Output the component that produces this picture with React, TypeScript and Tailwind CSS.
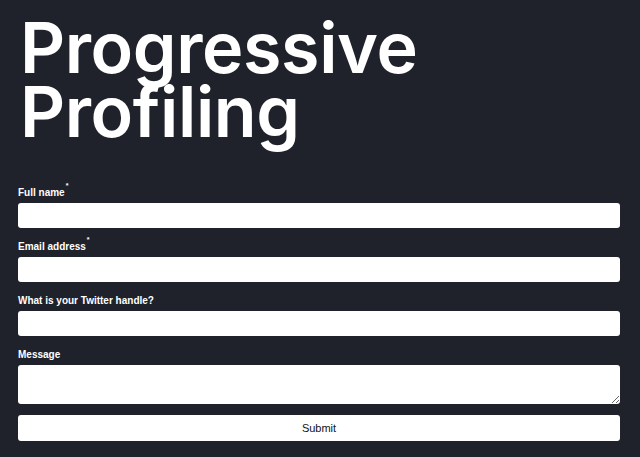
import { useState } from "react";

type Field = {
  name: string;
  label: string;
  required?: boolean;
  multiline?: boolean;
};

const fields: Field[] = [
  { name: "fullName", label: "Full name", required: true },
  { name: "email", label: "Email address", required: true },
  { name: "twitter", label: "What is your Twitter handle?" },
  { name: "message", label: "Message", multiline: true },
];

export default function App() {
  const [values, setValues] = useState<Record<string, string>>({});

  const update = (name: string, value: string) => {
    setValues((v) => ({ ...v, [name]: value }));
  };

  return (
    <div className="min-h-[457px] bg-[#20222b] pl-[18px] pr-[20px] pt-[16px] pb-[16px] font-['Liberation_Sans',Arial,sans-serif]">
      <h1 className="ml-[2px] text-[70px] leading-[64px] font-semibold tracking-[-0.4px] text-white font-['Inter','Noto_Sans',sans-serif]">
        Progressive
        <br />
        Profiling
      </h1>
      <form
        className="mt-[42px] flex flex-col gap-[12px]"
        onSubmit={(e) => e.preventDefault()}
      >
        {fields.map((f) => (
          <div key={f.name} className="flex flex-col">
            <label
              htmlFor={f.name}
              className="mb-[4px] text-[10px] leading-[13px] font-bold text-white"
            >
              {f.label}
              {f.required && (
                <sup className="ml-[1px] text-[7px] align-super">*</sup>
              )}
            </label>
            {f.multiline ? (
              <textarea
                id={f.name}
                value={values[f.name] ?? ""}
                onChange={(e) => update(f.name, e.target.value)}
                className="h-[39px] w-full rounded-[3px] bg-white px-2 text-[11px] text-black outline-none"
              />
            ) : (
              <input
                id={f.name}
                type="text"
                value={values[f.name] ?? ""}
                onChange={(e) => update(f.name, e.target.value)}
                className="h-[25px] w-full rounded-[3px] bg-white px-2 text-[11px] text-black outline-none"
              />
            )}
          </div>
        ))}
        <button
          type="submit"
          className="-mt-[1px] h-[26px] w-full rounded-[3px] bg-white text-[11px] text-[#111]"
        >
          Submit
        </button>
      </form>
    </div>
  );
}
